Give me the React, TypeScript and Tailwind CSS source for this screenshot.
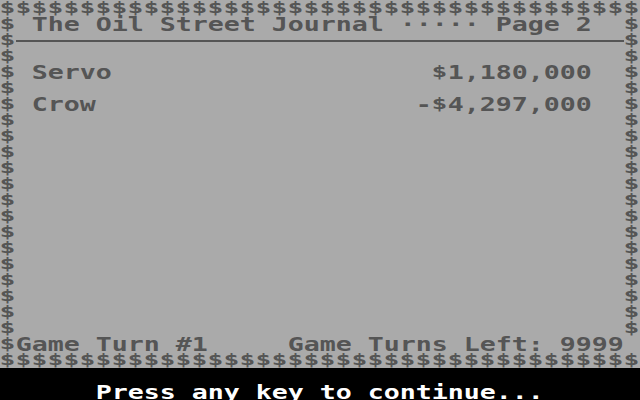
import React from "react";

const pad = (s: string, n: number) => (s.length >= n ? s.slice(0, n) : s + " ".repeat(n - s.length));

function Cell({ ch }: { ch: string }) {
  if (ch === "$") {
    return (
      <span className="w-4 h-4 flex justify-center items-center text-[15px] leading-4">
        <span className="inline-block scale-x-[1.75]">$</span>
      </span>
    );
  }
  return (
    <span className="w-4 h-4 flex justify-center">
      <span className="inline-block scale-x-[1.4] whitespace-pre">{ch === " " ? "\u00a0" : ch}</span>
    </span>
  );
}

function Line({ text, className = "" }: { text: string; className?: string }) {
  const chars = pad(text, 40).split("");
  return (
    <div className={"flex h-4 " + className}>
      {chars.map((c, i) => (
        <Cell key={i} ch={c} />
      ))}
    </div>
  );
}

export default function App() {
  const border = "$".repeat(40);
  const blank = "$" + " ".repeat(38) + "$";
  const row1 = "$ The Oil Street Journal \u00b7\u00b7\u00b7\u00b7\u00b7 Page 2  $";
  const row4 = pad("$ Servo", 27) + "$1,180,000" + "  $";
  const row6 = pad("$ Crow", 26) + "-$4,297,000" + "  $";
  const row21 = pad("$Game Turn #1", 18) + "Game Turns Left: 9999 ";
  const press = "      Press any key to continue...";
  const blanks = Array.from({ length: 14 }, (_, i) => i);

  return (
    <div
      className="w-[640px] h-[400px] bg-[#aaaaaa] text-[#555555] flex flex-col overflow-hidden text-[19px] leading-4 font-bold"
      style={{ fontFamily: '"DejaVu Sans Mono", monospace' }}
    >
      <Line text={border} />
      <Line text={row1} />
      <div className="flex h-4">
        <Cell ch="$" />
        <div className="flex-1 pt-2">
          <div className="h-[2px] bg-[#555555]" />
        </div>
        <Cell ch="$" />
      </div>
      <Line text={blank} />
      <Line text={row4} />
      <Line text={blank} />
      <Line text={row6} />
      {blanks.map((i) => (
        <Line key={i} text={blank} />
      ))}
      <Line text={row21} />
      <Line text={border} />
      <div className="bg-black h-8 flex flex-col justify-end text-white">
        <Line text={press} />
      </div>
    </div>
  );
}
